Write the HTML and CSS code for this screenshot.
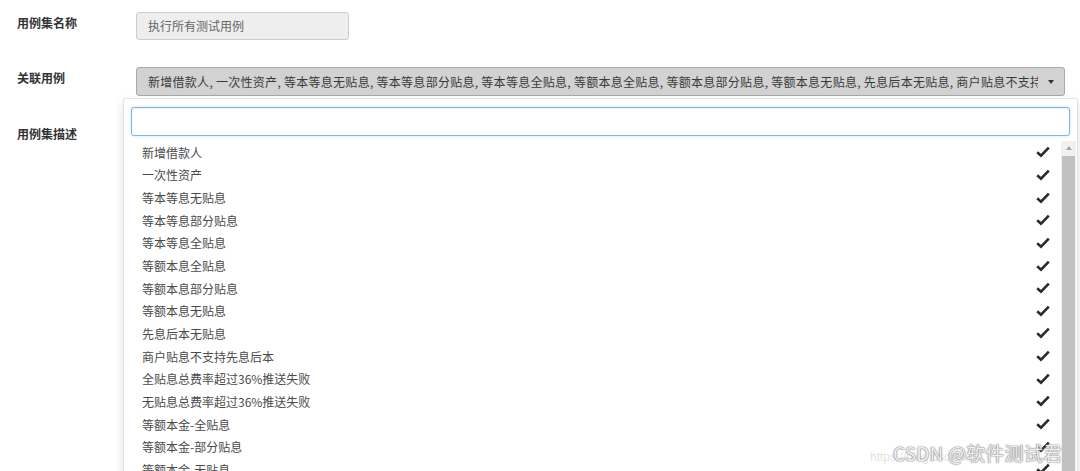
FILE: index.html
```html
<!DOCTYPE html>
<html lang="zh-CN">
<head>
<meta charset="utf-8">
<title>用例集</title>
<link rel="stylesheet" href="styles.css">
</head>
<body>
<svg class="defs" width="0" height="0" aria-hidden="true">
  <symbol id="ok" viewBox="0 0 14 12">
    <path d="M1.2 6.2 L5 9.6 L12.8 1.6" fill="none" stroke="#2b2b2b" stroke-width="2.6" stroke-linejoin="miter"/>
  </symbol>
</svg>

<form class="suite-form">
  <div class="form-row row-name">
    <label class="form-label">用例集名称</label>
    <div class="form-control readonly">执行所有测试用例</div>
  </div>

  <div class="form-row row-cases">
    <label class="form-label">关联用例</label>
    <div class="picker">
      <button type="button" class="picker-toggle">
        <span class="picker-value">新增借款人, 一次性资产, 等本等息无贴息, 等本等息部分贴息, 等本等息全贴息, 等额本息全贴息, 等额本息部分贴息, 等额本息无贴息, 先息后本无贴息, 商户贴息不支持先息后本, 全贴息总费率超过36%推送失败, 无贴息总费率超过36%推送失败, 等额本金-全贴息, 等额本金-部分贴息, 等额本金-无贴息</span>
        <span class="caret"></span>
      </button>

      <div class="picker-menu">
        <div class="search-wrap"><input class="search-box" type="text"></div>
        <div class="menu-body">
          <ul class="option-list">
            <li><span>新增借款人</span><svg class="check"><use href="#ok"/></svg></li>
            <li><span>一次性资产</span><svg class="check"><use href="#ok"/></svg></li>
            <li><span>等本等息无贴息</span><svg class="check"><use href="#ok"/></svg></li>
            <li><span>等本等息部分贴息</span><svg class="check"><use href="#ok"/></svg></li>
            <li><span>等本等息全贴息</span><svg class="check"><use href="#ok"/></svg></li>
            <li><span>等额本息全贴息</span><svg class="check"><use href="#ok"/></svg></li>
            <li><span>等额本息部分贴息</span><svg class="check"><use href="#ok"/></svg></li>
            <li><span>等额本息无贴息</span><svg class="check"><use href="#ok"/></svg></li>
            <li><span>先息后本无贴息</span><svg class="check"><use href="#ok"/></svg></li>
            <li><span>商户贴息不支持先息后本</span><svg class="check"><use href="#ok"/></svg></li>
            <li><span>全贴息总费率超过36%推送失败</span><svg class="check"><use href="#ok"/></svg></li>
            <li><span>无贴息总费率超过36%推送失败</span><svg class="check"><use href="#ok"/></svg></li>
            <li><span>等额本金-全贴息</span><svg class="check"><use href="#ok"/></svg></li>
            <li><span>等额本金-部分贴息</span><svg class="check"><use href="#ok"/></svg></li>
            <li><span>等额本金-无贴息</span><svg class="check"><use href="#ok"/></svg></li>
          </ul>
          <div class="scrollbar">
            <span class="scroll-up"></span>
            <span class="scroll-thumb"></span>
          </div>
        </div>
      </div>
    </div>
  </div>

  <div class="form-row row-desc">
    <label class="form-label">用例集描述</label>
  </div>
</form>

<div class="watermark">
  <span class="wm-url">https://blog.csdn.net/</span>
  <span class="wm-name">CSDN @软件测试君</span>
</div>
</body>
</html>
```

FILE: styles.css
```css
html, body {
  margin: 0;
  padding: 0;
  background: #fff;
  overflow: hidden;
  height: 471px;
}

body {
  font-family: "Noto Sans CJK SC", "Noto Sans", "Liberation Sans", sans-serif;
  font-size: 12px;
  color: #333;
  position: relative;
}

.defs {
  position: absolute;
}

.suite-form {
  display: flex;
  flex-direction: column;
  padding: 12px 0 0 17px;
}

.form-row {
  display: flex;
  align-items: flex-start;
}

.form-label {
  width: 119px;
  flex: none;
  font-weight: bold;
  color: #333;
  line-height: 17px;
  padding-top: 2px;
}

.row-cases {
  margin-top: 27px;
}

.row-desc {
  margin-top: 27px;
}

.form-control {
  box-sizing: border-box;
  height: 28px;
  line-height: 26px;
  padding: 0 11px;
  border: 1px solid #ccc;
  border-radius: 3px;
}

.readonly {
  width: 213px;
  background: #eee;
  color: #666;
}

/* select toggle */
.picker {
  position: relative;
  width: 929px;
}

.picker-toggle {
  box-sizing: border-box;
  display: flex;
  align-items: center;
  width: 100%;
  height: 29px;
  margin: 0;
  padding: 0 10px 0 11px;
  border: 1px solid #a9a9a9;
  border-radius: 3px;
  background: #d2d2d2;
  font: inherit;
  color: #3a3a3a;
  text-align: left;
}

.picker-value {
  flex: 1;
  white-space: nowrap;
  overflow: hidden;
  text-overflow: clip;
  margin-right: 10px;
  letter-spacing: 0.28px;
}

.caret {
  width: 0;
  height: 0;
  border-left: 3.5px solid transparent;
  border-right: 3.5px solid transparent;
  border-top: 4px solid #333;
  margin-top: 1px;
}

/* open menu */
.picker-menu {
  position: absolute;
  left: -13px;
  top: 31px;
  width: 955px;
  height: 390px;
  box-sizing: border-box;
  background: #fff;
  border: 1px solid #e2e2e2;
  border-radius: 3px;
  box-shadow: 0 4px 10px rgba(0, 0, 0, 0.12);
  display: flex;
  flex-direction: column;
}

.search-wrap {
  padding: 8px 7px 5px 7px;
}

.search-box {
  display: block;
  box-sizing: border-box;
  width: 100%;
  height: 29px;
  margin: 0;
  border: 1px solid #7eb4e6;
  border-radius: 3px;
  box-shadow: inset 0 1px 1px rgba(0, 0, 0, 0.06), 0 0 3px rgba(102, 175, 233, 0.35);
  outline: none;
}

.menu-body {
  display: flex;
  flex: 1;
  min-height: 0;
}

.option-list {
  flex: 1;
  list-style: none;
  margin: 0;
  padding: 0;
}

.option-list li {
  display: flex;
  align-items: center;
  justify-content: space-between;
  height: 22.65px;
  padding: 0 11px 0 18px;
  color: #4a4a4a;
}

.check {
  display: block;
  width: 14px;
  height: 12px;
}

/* scrollbar column */
.scrollbar {
  width: 15px;
  flex: none;
  margin-right: 1px;
  background: #f1f1f1;
  display: flex;
  flex-direction: column;
  align-items: center;
}

.scroll-up {
  width: 0;
  height: 0;
  margin: 5px 0 6px;
  border-left: 3.5px solid transparent;
  border-right: 3.5px solid transparent;
  border-bottom: 4px solid #a3a3a3;
}

.scroll-thumb {
  width: 13px;
  flex: 1;
  background: #c1c1c1;
}

/* site watermark */
.watermark {
  position: absolute;
  left: 870px;
  top: 440px;
  width: 210px;
  height: 31px;
}

.wm-url {
  position: absolute;
  left: 0;
  top: 10px;
  font-family: "Liberation Sans", sans-serif;
  font-size: 12px;
  color: rgba(200, 200, 200, 0.55);
  white-space: nowrap;
}

.wm-name {
  position: absolute;
  left: 23px;
  top: 0;
  font-size: 19px;
  line-height: 26px;
  color: rgba(255, 255, 255, 0.9);
  letter-spacing: 0.2px;
  white-space: nowrap;
  text-shadow: 0 0 1px #888, 0 0 1px #888, 0 0 2px #999;
}
```
